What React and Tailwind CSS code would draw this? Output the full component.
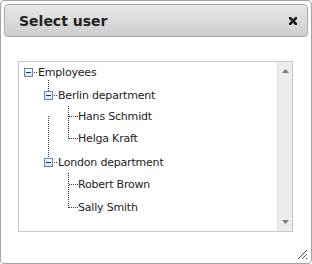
import React from "react";

const OX = 19;
const OY = 62;

function MinusIcon() {
  return (
    <svg width="9" height="9" viewBox="0 0 9 9" className="shrink-0 block">
      <defs>
        <linearGradient id="mg" x1="0" y1="0" x2="0" y2="1">
          <stop offset="0" stopColor="#ffffff" />
          <stop offset="1" stopColor="#d6e2f0" />
        </linearGradient>
      </defs>
      <rect x="0.5" y="0.5" width="8" height="8" fill="url(#mg)" stroke="#5b88bd" />
      <rect x="2" y="4" width="5" height="1" fill="#1f3550" />
    </svg>
  );
}

const rows = [
  { label: "Employees", level: 0, h: "h-[21px]", folder: true },
  { label: "Berlin department", level: 1, h: "h-[23px] pt-[2px]", folder: true },
  { label: "Hans Schmidt", level: 2, h: "h-[21px]" },
  { label: "Helga Kraft", level: 2, h: "h-[23px]" },
  { label: "London department", level: 1, h: "h-[23px] pt-[2px]", folder: true },
  { label: "Robert Brown", level: 2, h: "h-[23px]" },
  { label: "Sally Smith", level: 2, h: "h-[23px]" },
];

const padFor = {
  0: "pl-[5px]",
  1: "pl-[25px]",
  2: "pl-[59px]",
};

function Connectors() {
  const V = (x, y1, y2) => (
    <line x1={x - OX + 0.5} x2={x - OX + 0.5} y1={y1 - OY} y2={y2 - OY + 1} stroke="#3a3a3a" strokeDasharray="1 1" />
  );
  const H = (y, x1, x2) => (
    <line y1={y - OY + 0.5} y2={y - OY + 0.5} x1={x1 - OX} x2={x2 - OX + 1} stroke="#3a3a3a" strokeDasharray="1 1" />
  );
  return (
    <svg className="absolute left-0 top-0 pointer-events-none" width="258" height="169">
      {H(72, 34, 36)}
      {H(95, 54, 56)}
      {H(162, 54, 56)}
      {V(48, 80, 90)}
      {V(48, 116, 156)}
      {V(68, 106, 138)}
      {H(116, 69, 77)}
      {H(138, 69, 77)}
      {V(68, 173, 207)}
      {H(184, 69, 77)}
      {H(207, 69, 77)}
    </svg>
  );
}

export default function App() {
  return (
    <div className="w-[312px] h-[264px] bg-white">
      <div className="w-[312px] h-[264px] border border-[#a6a6a6] rounded-[4px] bg-white p-[3px] flex flex-col relative">
        <div className="h-[33px] border border-[#a9a9a9] rounded-[4px] bg-gradient-to-b from-[#e8e8e8] to-[#cdcdcd] flex items-center justify-between pl-[14px] pr-[10px]">
          <span className="text-[14px] font-bold text-[#222] pt-[1px]" style={{ fontFamily: '"DejaVu Sans", sans-serif' }}>
            Select user
          </span>
          <svg width="8" height="8" viewBox="0 0 8 8" className="block">
            <path d="M1 1 L7 7 M7 1 L1 7" stroke="#1a1a1a" strokeWidth="2.5" strokeLinecap="square" />
          </svg>
        </div>
        <div className="ml-[14px] mt-[24px] w-[275px] h-[171px] border border-[#c9c9c9] flex relative">
          <div className="flex-1 relative" style={{ fontFamily: '"DejaVu Sans", sans-serif' }}>
            <Connectors />
            <div className="flex flex-col">
              {rows.map((r) => (
                <div key={r.label} className={`${r.h} ${padFor[r.level]} flex items-center`}>
                  {r.folder && <MinusIcon />}
                  <span className={`${r.folder ? "ml-[5px]" : ""} text-[11px] tracking-[-0.2px] text-[#222] leading-none whitespace-nowrap`}>
                    {r.label}
                  </span>
                </div>
              ))}
            </div>
          </div>
          <div className="w-[15px] h-full bg-[#ececec] border-l border-[#e2e2e2] flex flex-col justify-between items-center py-[7px]">
            <svg width="7" height="4" viewBox="0 0 7 4" className="block">
              <path d="M3.5 0 L7 4 L0 4 Z" fill="#7a7a7a" />
            </svg>
            <svg width="7" height="4" viewBox="0 0 7 4" className="block">
              <path d="M0 0 L7 0 L3.5 4 Z" fill="#7a7a7a" />
            </svg>
          </div>
        </div>
        <div className="flex-1 flex items-end justify-end">
          <svg width="12" height="12" viewBox="0 0 12 12" className="block">
            <path d="M11 2 L2 11 M11 6 L6 11 M11 10 L10 11" stroke="#555" strokeWidth="1" />
          </svg>
        </div>
      </div>
    </div>
  );
}
